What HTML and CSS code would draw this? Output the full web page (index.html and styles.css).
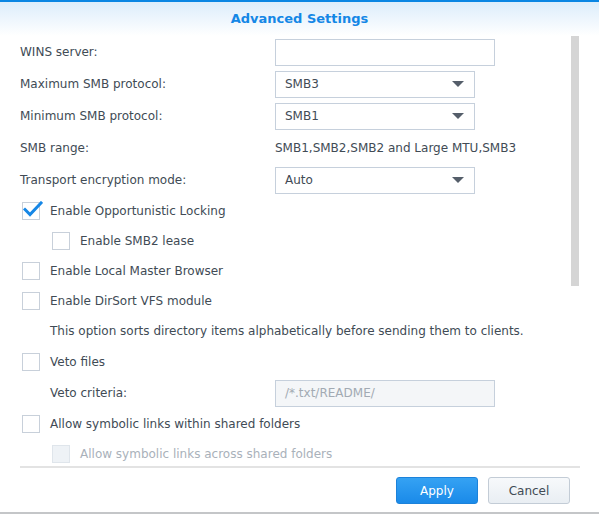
FILE: index.html
```
<!DOCTYPE html>
<html>
<head>
<meta charset="utf-8">
<link rel="stylesheet" href="styles.css">
</head>
<body>
<div class="dialog">
  <div class="title">Advanced Settings</div>
  <div class="body">
    <div class="content">
      <div class="row">
        <div class="label">WINS server:</div>
        <div class="input wide"></div>
      </div>
      <div class="row">
        <div class="label">Maximum SMB protocol:</div>
        <div class="select"><span>SMB3</span><span class="arrow"></span></div>
      </div>
      <div class="row">
        <div class="label">Minimum SMB protocol:</div>
        <div class="select"><span>SMB1</span><span class="arrow"></span></div>
      </div>
      <div class="row">
        <div class="label">SMB range:</div>
        <div class="value">SMB1,SMB2,SMB2 and Large MTU,SMB3</div>
      </div>
      <div class="row">
        <div class="label">Transport encryption mode:</div>
        <div class="select"><span>Auto</span><span class="arrow"></span></div>
      </div>
      <div class="check">
        <span class="box checked"><svg width="20" height="16" viewBox="0 0 20 16"><path d="M2 8.5 L7 13.5 L18 2" fill="none" stroke="#1687e6" stroke-width="3" stroke-linecap="square" stroke-linejoin="miter"/></svg></span>
        <span class="ctext">Enable Opportunistic Locking</span>
      </div>
      <div class="check sub">
        <span class="box"></span>
        <span class="ctext">Enable SMB2 lease</span>
      </div>
      <div class="check">
        <span class="box"></span>
        <span class="ctext">Enable Local Master Browser</span>
      </div>
      <div class="check">
        <span class="box"></span>
        <span class="ctext">Enable DirSort VFS module</span>
      </div>
      <div class="desc">This option sorts directory items alphabetically before sending them to clients.</div>
      <div class="check tall">
        <span class="box"></span>
        <span class="ctext">Veto files</span>
      </div>
      <div class="row veto">
        <div class="label indent">Veto criteria:</div>
        <div class="input wide disabled">/*.txt/README/</div>
      </div>
      <div class="check">
        <span class="box"></span>
        <span class="ctext">Allow symbolic links within shared folders</span>
      </div>
      <div class="check sub off">
        <span class="box"></span>
        <span class="ctext">Allow symbolic links across shared folders</span>
      </div>
    </div>
    <div class="track"><div class="thumb"></div></div>
  </div>
  <div class="footer">
    <button class="btn primary">Apply</button>
    <button class="btn">Cancel</button>
  </div>
</div>
</body>
</html>
```
FILE: styles.css
```
html, body {
  margin: 0;
  padding: 0;
  background: #fff;
}
body {
  font-family: "DejaVu Sans", Verdana, sans-serif;
  font-size: 12px;
  color: #414b55;
}
.dialog {
  width: 599px;
  height: 514px;
  display: flex;
  flex-direction: column;
  box-sizing: border-box;
  border-top: 2px solid #0a86e3;
  border-bottom: 2px solid #c4c6c8;
  background: #fff;
}
.title {
  height: 34px;
  flex: none;
  display: flex;
  align-items: center;
  justify-content: center;
  font-weight: bold;
  font-size: 13px;
  color: #1487e6;
  background: linear-gradient(#dcedfb, #ffffff);
  padding-bottom: 2px;
  box-sizing: border-box;
}
.body {
  flex: none;
  height: 430px;
  display: flex;
  overflow: hidden;
}
.content {
  flex: 1;
  padding-left: 20px;
  overflow: hidden;
}
.track {
  flex: none;
  width: 8px;
  margin-right: 20px;
}
.thumb {
  height: 250px;
  background: #d5d5d5;
}
.row {
  height: 32px;
  display: flex;
  align-items: center;
}
.label {
  width: 255px;
  flex: none;
}
.indent {
  padding-left: 30px;
  box-sizing: border-box;
}
.input, .select {
  height: 27px;
  box-sizing: border-box;
  border: 1px solid #c6d0dc;
  background: #fff;
  display: flex;
  align-items: center;
  padding-left: 9px;
}
.wide { width: 220px; }
.select {
  width: 200px;
  justify-content: space-between;
  padding-right: 10px;
}
.arrow {
  width: 0;
  height: 0;
  border-left: 6px solid transparent;
  border-right: 6px solid transparent;
  border-top: 6px solid #555e6a;
}
.disabled {
  background: #f4f6f8;
  color: #a2aab3;
}
.value { white-space: nowrap; }
.check {
  height: 30px;
  display: flex;
  align-items: center;
}
.check.tall { height: 31px; }
.check.sub { padding-left: 30px; }
.box {
  width: 18px;
  height: 18px;
  box-sizing: border-box;
  border: 1px solid #c8d0da;
  background: #fff;
  flex: none;
  margin-left: 2px;
  margin-right: 10px;
  position: relative;
}
.box.checked svg {
  position: absolute;
  left: 0;
  top: -2px;
}
.off .box {
  background: #eef2f6;
  border-color: #dfe5eb;
}
.off .ctext { color: #a9b1ba; }
.desc {
  height: 30px;
  display: flex;
  align-items: center;
  padding-left: 30px;
  white-space: nowrap;
}
.footer {
  flex: 1;
  border-top: 2px solid #e3e3e3;
  margin: 0 19px 0 20px;
  padding: 9px 10px 0 0;
  display: flex;
  justify-content: flex-end;
  align-items: flex-start;
  gap: 10px;
}
.btn {
  width: 82px;
  height: 27px;
  border-radius: 3px;
  border: 1px solid #c3ccd6;
  background: linear-gradient(#f7f9fb, #e9eef3);
  font-family: "DejaVu Sans", Verdana, sans-serif;
  font-size: 12px;
  color: #414b55;
  padding: 0;
}
.btn.primary {
  background: linear-gradient(#35a2f3, #1a8ae9);
  border-color: #1c82da;
  color: #fff;
}
```
